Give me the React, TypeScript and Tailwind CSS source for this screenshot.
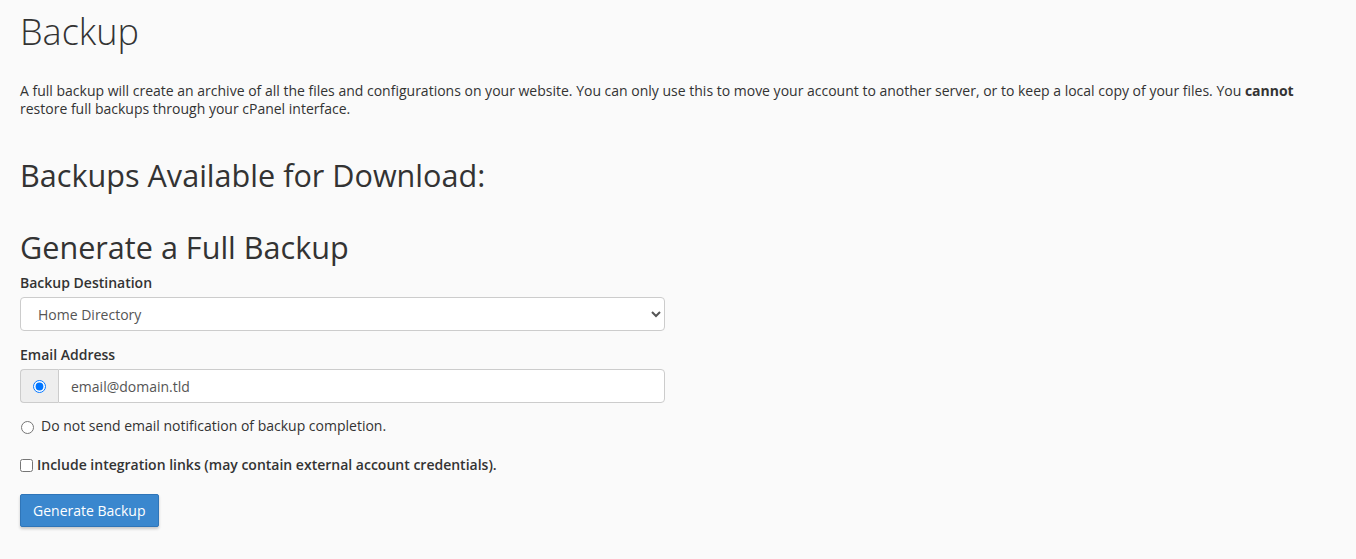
import { useState } from 'react';

const App = () => {
  const [notify, setNotify] = useState<'email' | 'none'>('email');
  const [email, setEmail] = useState('email@domain.tld');
  const [integration, setIntegration] = useState(false);

  return (
    <div className="min-h-screen bg-[#fafafa] text-[#333] font-['Open_Sans',sans-serif] text-[14px] px-5">
      {/* Title */}
      <h1 className="text-[36px] font-light leading-[40px] pt-[12px] mb-[30px]">Backup</h1>

      <p className="leading-[18px] mb-[40px]">
        A full backup will create an archive of all the files and configurations on your website. You can only use
        this to move your account to another server, or to keep a local copy of your files. You{' '}
        <strong className="font-bold">cannot</strong> restore full backups through your cPanel interface.
      </p>

      <h2 className="text-[30.6px] leading-[34px] mb-[38px]">Backups Available for Download:</h2>

      <h2 className="text-[30.6px] leading-[34px] mb-[9px]">Generate a Full Backup</h2>

      <div className="w-[645px]">
        {/* Destination */}
        <label className="block font-semibold leading-[20px] mb-[4px]">Backup Destination</label>
        <select className="w-full h-[34px] border border-[#ccc] rounded-[4px] bg-white pl-[13px] pr-2 text-[14px] text-[#555] mb-[14px]">
          <option>Home Directory</option>
          <option>Remote FTP Server</option>
          <option>Remote FTP Server (Passive Mode Transfer)</option>
          <option>Secure Copy (SCP)</option>
        </select>

        {/* Email */}
        <label className="block font-semibold leading-[20px] mb-[4px]">Email Address</label>
        <div className="flex h-[34px] mb-[13px]">
          <span className="w-[38px] flex items-center justify-center bg-[#eee] border border-[#ccc] border-r-0 rounded-l-[4px]">
            <input
              type="radio"
              name="notify"
              checked={notify === 'email'}
              onChange={() => setNotify('email')}
              className="w-[13px] h-[13px] m-0"
            />
          </span>
          <input
            type="text"
            value={email}
            onChange={(e) => setEmail(e.target.value)}
            className="flex-1 border border-[#ccc] rounded-r-[4px] bg-white px-3 text-[14px] text-[#555] outline-none"
          />
        </div>

        <label className="flex items-center gap-[7px] leading-[20px] mb-[19px]">
          <input
            type="radio"
            name="notify"
            checked={notify === 'none'}
            onChange={() => setNotify('none')}
            className="w-[13px] h-[13px] m-0 ml-[1px] mt-[2px]"
          />
          <span>Do not send email notification of backup completion.</span>
        </label>

        <label className="flex items-center gap-[4px] leading-[20px] font-semibold mb-[19px]">
          <input
            type="checkbox"
            checked={integration}
            onChange={(e) => setIntegration(e.target.checked)}
            className="w-[13px] h-[13px] m-0"
          />
          <span>Include integration links (may contain external account credentials).</span>
        </label>

        <button className="h-[33px] px-3 bg-[#3a87ce] border border-[#2f75b8] rounded-[2px] text-white text-[14px] shadow-[0_2px_3px_rgba(0,0,0,0.2)]">
          Generate Backup
        </button>
      </div>
    </div>
  );
};

export default App;
